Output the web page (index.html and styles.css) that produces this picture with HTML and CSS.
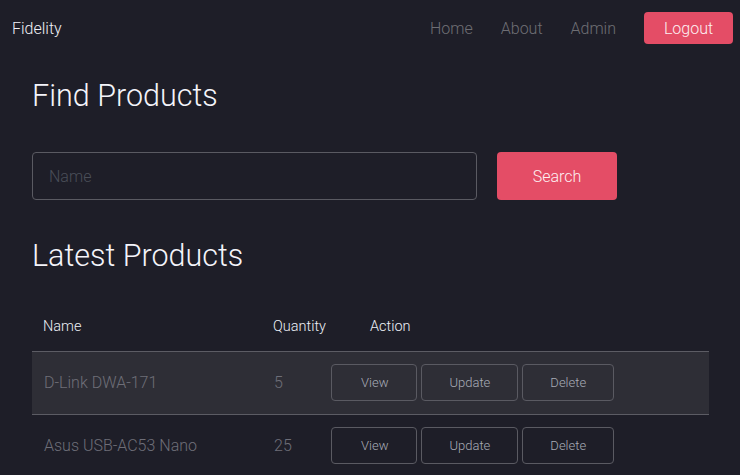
FILE: index.html
```html
<!DOCTYPE html>
<html lang="en">
<head>
<meta charset="utf-8">
<title>Fidelity</title>
<link rel="stylesheet" href="styles.css">
</head>
<body>
<nav class="navbar">
  <a class="brand" href="#">Fidelity</a>
  <div class="nav-links">
    <a class="nav-link" href="#">Home</a>
    <a class="nav-link" href="#">About</a>
    <a class="nav-link" href="#">Admin</a>
    <button class="btn-primary btn-logout">Logout</button>
  </div>
</nav>
<main class="container">
  <h1 class="heading">Find Products</h1>
  <form class="search-form">
    <input class="search-input" type="text" placeholder="Name">
    <button class="btn-primary btn-search" type="button">Search</button>
  </form>
  <h1 class="heading heading-latest">Latest Products</h1>
  <table class="products">
    <thead>
      <tr>
        <th class="col-name">Name</th>
        <th class="col-qty">Quantity</th>
        <th class="col-action">Action</th>
      </tr>
    </thead>
    <tbody>
      <tr class="striped">
        <td class="cell-name">D-Link DWA-171</td>
        <td class="cell-qty">5</td>
        <td class="cell-action"><div class="actions"><button class="btn-outline">View</button><button class="btn-outline">Update</button><button class="btn-outline">Delete</button></div></td>
      </tr>
      <tr>
        <td class="cell-name">Asus USB-AC53 Nano</td>
        <td class="cell-qty">25</td>
        <td class="cell-action"><div class="actions"><button class="btn-outline">View</button><button class="btn-outline">Update</button><button class="btn-outline">Delete</button></div></td>
      </tr>
    </tbody>
  </table>
</main>
</body>
</html>
```
FILE: styles.css
```css
* { box-sizing: border-box; }
html, body {
  margin: 0;
  padding: 0;
  background: #1e1e28;
  font-family: Roboto, "Liberation Sans", sans-serif;
  font-weight: 300;
  color: #f0f0f6;
  overflow: hidden;
}
.navbar {
  height: 56px;
  display: flex;
  align-items: center;
  justify-content: space-between;
  padding: 0 7px 0 12px;
}
.brand {
  color: #f0f0f6;
  text-decoration: none;
  font-size: 16px;
}
.nav-links {
  display: flex;
  align-items: center;
  gap: 28px;
}
.nav-link {
  color: #6e6e74;
  text-decoration: none;
  font-size: 16px;
}
.btn-primary {
  background: #e44d66;
  color: #fdf0f2;
  border: none;
  border-radius: 4px;
  font-family: inherit;
  font-weight: 300;
  font-size: 16px;
  cursor: pointer;
}
.btn-logout {
  height: 32px;
  width: 89px;
  padding: 0;
}
.container {
  padding: 21px 32px 0 32px;
}
.heading {
  margin: 0;
  font-size: 30.5px;
  font-weight: 300;
  line-height: 38px;
  color: #f4f4fa;
}
.search-form {
  display: flex;
  gap: 20px;
  margin: 37px 0 37px 0;
}
.search-input {
  width: 445px;
  height: 48px;
  background: transparent;
  border: 1px solid #5a5a62;
  border-radius: 4px;
  padding: 0 16px;
  font-family: inherit;
  font-weight: 300;
  font-size: 16px;
  color: #ddd;
  outline: none;
}
.search-input::placeholder { color: #4a4e58; }
.btn-search {
  width: 120px;
  height: 48px;
}
.products {
  width: 677px;
  table-layout: fixed;
  border-collapse: collapse;
  margin-top: 24px;
}
.products th {
  text-align: left;
  font-weight: 300;
  font-size: 14.5px;
  color: #ecf0f6;
  height: 52px;
  padding: 4px 0 0 0;
  vertical-align: middle;
}
.col-name { width: 230px; padding-left: 11px !important; }
.col-qty { width: 57px; padding-left: 11px !important; }
.col-action { padding-left: 51px !important; }
.products td {
  border-top: 1px solid #5c5c64;
  height: 63px;
  padding: 0;
  vertical-align: middle;
  font-size: 16px;
  color: #6e6e78;
}
.products tr.striped { background: #2e2e36; }
.products tr.striped td { border-bottom: 1px solid #5c5c64; }
.cell-name { padding-left: 12px !important; }
.cell-qty { padding-left: 12px !important; }
.cell-action { padding-left: 12px !important; }
.actions {
  display: flex;
  gap: 4px;
}
.btn-outline {
  height: 37px;
  background: transparent;
  border: 1px solid #5a5a62;
  border-radius: 4px;
  color: #a8acb6;
  font-family: inherit;
  font-weight: 300;
  font-size: 13px;
  padding: 0 27px;
  cursor: pointer;
}
.btn-outline:first-child { padding: 0 28px 0 29px; }
```
